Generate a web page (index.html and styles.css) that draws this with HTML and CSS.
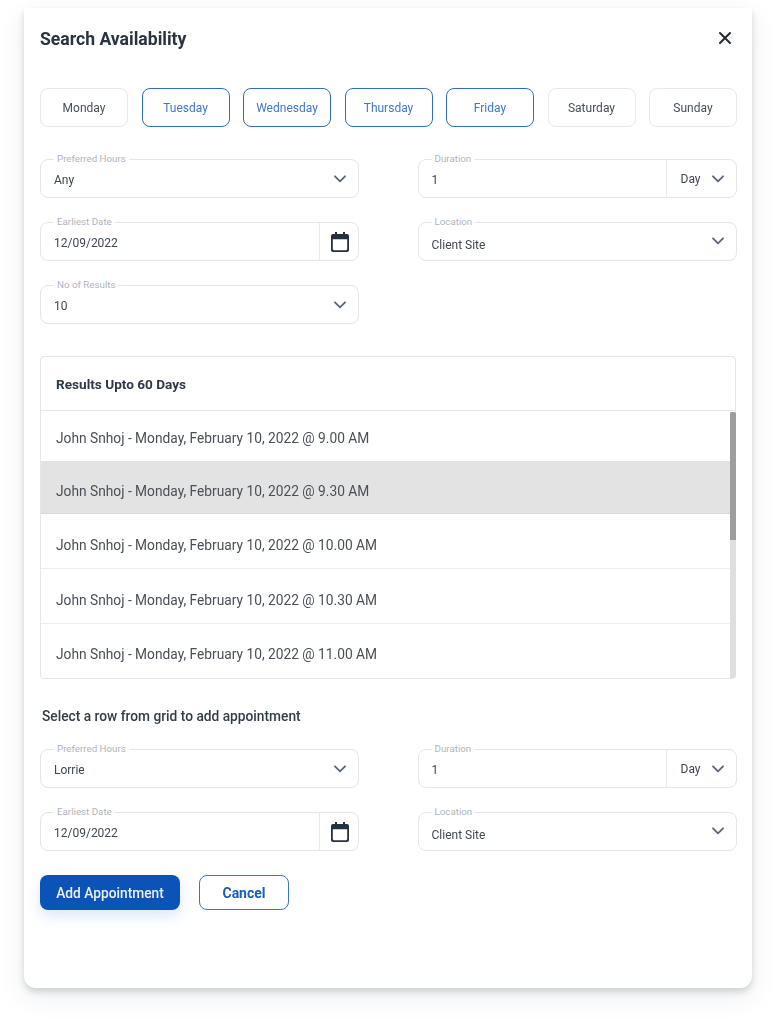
FILE: index.html
```html
<!DOCTYPE html>
<html lang="en">
<head>
<meta charset="utf-8">
<title>Search Availability</title>
<link rel="stylesheet" href="styles.css">
</head>
<body>
<svg class="sprite" width="0" height="0" aria-hidden="true">
  <symbol id="chev" viewBox="0 0 12 8"><path d="M1 1.3l5 5 5-5" fill="none" stroke="#5b6675" stroke-width="1.8" stroke-linecap="round" stroke-linejoin="round"/></symbol>
  <symbol id="cal" viewBox="0 0 18 20"><path fill-rule="evenodd" d="M4 0h2v2h6V0h2v2h2a2 2 0 0 1 2 2v14a2 2 0 0 1-2 2H2a2 2 0 0 1-2-2V4a2 2 0 0 1 2-2h2zM1.8 7.2V17c0 .7.5 1.2 1.2 1.2h12c.7 0 1.2-.5 1.2-1.2V7.2z" fill="#263140"/></symbol>
</svg>
<main class="card">
  <header class="head">
    <h1>Search Availability</h1>
    <svg class="close" width="14" height="14" viewBox="0 0 14 14"><path d="M2 2l10 10M12 2L2 12" stroke="#262b33" stroke-width="2" stroke-linecap="round"/></svg>
  </header>

  <div class="days">
    <button class="day">Monday</button>
    <button class="day on">Tuesday</button>
    <button class="day on">Wednesday</button>
    <button class="day on">Thursday</button>
    <button class="day on">Friday</button>
    <button class="day">Saturday</button>
    <button class="day">Sunday</button>
  </div>

  <div class="form">
    <div class="field"><span class="lab">Preferred Hours</span><span class="val">Any</span><svg class="chev"><use href="#chev"/></svg></div>
    <div class="field"><span class="lab">Duration</span><span class="val">1</span><span class="unit">Day<svg class="chev"><use href="#chev"/></svg></span></div>
    <div class="field"><span class="lab">Earliest Date</span><span class="val">12/09/2022</span><span class="calbox"><svg class="calico"><use href="#cal"/></svg></span></div>
    <div class="field"><span class="lab">Location</span><span class="val low">Client Site</span><svg class="chev up"><use href="#chev"/></svg></div>
    <div class="field"><span class="lab">No of Results</span><span class="val">10</span><svg class="chev"><use href="#chev"/></svg></div>
  </div>

  <section class="results">
    <div class="rhead">Results Upto 60 Days</div>
    <div class="rbody">
      <ul class="rows">
        <li class="row r1">John Snhoj - Monday, February 10, 2022 @ 9.00 AM</li>
        <li class="row sel">John Snhoj - Monday, February 10, 2022 @ 9.30 AM</li>
        <li class="row">John Snhoj - Monday, February 10, 2022 @ 10.00 AM</li>
        <li class="row r4">John Snhoj - Monday, February 10, 2022 @ 10.30 AM</li>
        <li class="row last">John Snhoj - Monday, February 10, 2022 @ 11.00 AM</li>
      </ul>
      <div class="track"><div class="thumb"></div></div>
    </div>
  </section>

  <p class="hint">Select a row from grid to add appointment</p>

  <div class="form second">
    <div class="field"><span class="lab">Preferred Hours</span><span class="val">Lorrie</span><svg class="chev"><use href="#chev"/></svg></div>
    <div class="field"><span class="lab">Duration</span><span class="val">1</span><span class="unit">Day<svg class="chev"><use href="#chev"/></svg></span></div>
    <div class="field"><span class="lab">Earliest Date</span><span class="val">12/09/2022</span><span class="calbox"><svg class="calico"><use href="#cal"/></svg></span></div>
    <div class="field"><span class="lab">Location</span><span class="val low">Client Site</span><svg class="chev up"><use href="#chev"/></svg></div>
  </div>

  <div class="actions">
    <button class="btn primary">Add Appointment</button>
    <button class="btn ghost">Cancel</button>
  </div>
</main>
</body>
</html>
```
FILE: styles.css
```css
* { box-sizing: border-box; }
html, body { margin: 0; padding: 0; background: #fff; }
body { font-family: Roboto, "Liberation Sans", sans-serif; color: #3a4350; height: 1025px; overflow: hidden; }
.sprite { position: absolute; }
.card {
  margin: 8px 24px 0;
  width: 728px;
  height: 980px;
  padding: 0 15px 0 16px;
  background: #fff;
  border-radius: 0 0 12px 12px;
  box-shadow: 0 4px 6px rgba(60,72,88,.2), 0 8px 28px rgba(60,72,88,.09);
  filter: blur(.45px);
}
.head { height: 80px; display: flex; justify-content: space-between; align-items: flex-start; padding-top: 21px; }
h1 { margin: 0; font-size: 17.6px; line-height: 20px; font-weight: 700; color: #2a3441; }
.close { margin: 2px 5px 0 0; }
.days { display: flex; justify-content: space-between; }
.day {
  width: 88px; height: 39px; padding: 0;
  font: 400 12px Roboto, sans-serif; color: #474f5a;
  background: #fff; border: 1px solid #e6e8ec; border-radius: 8px;
}
.day.on { color: #3f77c9; border-color: #2f6cc4; }
.form { display: grid; grid-template-columns: 319px 319px; column-gap: 58.5px; row-gap: 24px; margin-top: 32px; }
.field {
  position: relative; height: 39px; display: flex; align-items: center;
  border: 1px solid #e4e6eb; border-radius: 8px; padding-left: 13px;
  font-size: 12px; color: #3f4753;
}
.lab {
  position: absolute; left: 13px; top: -7px; padding: 0 3px;
  font-size: 9.75px; line-height: 12px; color: #aeb5c0; background: #fff;
}
.val { flex: 1; padding-top: 3px; }
.val.low { padding-top: 7px; }
.chev { width: 12px; height: 8px; margin-right: 12px; flex: none; }
.chev.up { margin-bottom: 1px; }
.unit { width: 70px; height: 100%; display: flex; align-items: center; justify-content: space-between; padding-left: 14px; border-left: 1px solid #e8eaee; font-size: 12px; }
.unit .chev { margin-right: 12px; }
.calbox { width: 39.5px; height: 100%; display: flex; align-items: center; justify-content: center; padding-left: 2px; border-left: 1px solid #e8eaee; }
.calico { width: 18px; height: 20px; }
.results { margin-top: 32px; width: 696px; height: 323px; border: 1px solid #e4e6ea; border-radius: 4px; }
.rhead { height: 54px; padding-left: 15px; display: flex; align-items: center; font-size: 13.6px; font-weight: 700; color: #2f3a48; border-bottom: 1px solid #e6e8ec; }
.rbody { display: flex; height: 267px; }
.rows { list-style: none; margin: 0; padding: 0; flex: 1; }
.row { height: 55px; padding: 8px 0 0 15px; display: flex; align-items: center; font-size: 13.75px; color: #4a4f57; border-bottom: 1px solid #eceef0; }
.row.r1 { height: 50px; padding-top: 3px; border-bottom: 0; }
.row.sel { height: 53px; background: #e3e3e3; border-bottom: 1px solid #d4d7dc; }
.row.r4 { padding-top: 7px; }
.row.last { height: 54px; padding-top: 5px; border-bottom: 0; }
.track { width: 6px; margin: 1px -1px 0 0; background: #dfdfdf; border-radius: 0 0 3px 0; }
.thumb { height: 128px; background: #9d9d9d; border-radius: 2px 2px 0 0; }
.hint { margin: 29px 0 0 2px; font-size: 13.75px; line-height: 16px; font-weight: 500; color: #333c49; }
.form.second { margin-top: 25px; }
.actions { display: flex; gap: 19px; margin-top: 24px; }
.btn { height: 35px; padding: 0; border-radius: 8px; font: 500 13.75px Roboto, sans-serif; }
.primary { width: 140px; color: #eaf0fa; background: #0c53b7; border: 0; box-shadow: 0 6px 14px rgba(12,83,183,.14); }
.ghost { width: 90px; color: #1c5cb9; font-weight: 700; font-size: 14px; background: #fff; border: 1px solid #3a74c7; }
```
